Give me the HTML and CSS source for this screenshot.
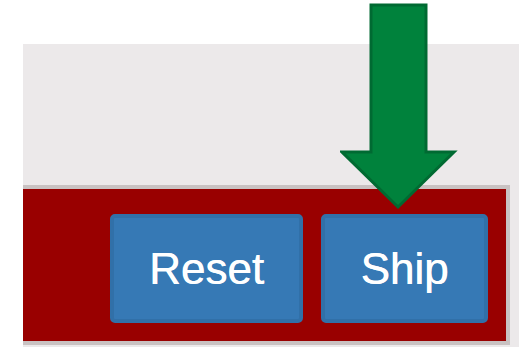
FILE: index.html
```html
<!doctype html>
<html>
<head>
<meta charset="utf-8">
<title>Ship</title>
<link rel="stylesheet" href="styles.css">
</head>

<body>
<div class="panel">
	<div class="actions">
		<button class="btn btn-reset" type="button">Reset</button>
		<button class="btn btn-ship" type="button">Ship</button>
	</div>
</div>

<svg class="arrow" width="120" height="212" viewBox="0 0 120 212">
	<polygon points="31,5 86,5 86,152 114,152 58,207 2,152 31,152" />
</svg>
</body>
</html>
```

FILE: styles.css
```css
html, body {
	margin: 0;
	padding: 0;
	background: #FFF;
	font-family: "Liberation Sans", Arial, sans-serif;
}
body {
	width: 519px;
	height: 347px;
	overflow: hidden;
	position: relative;
}
.panel {
	margin: 44px 0 0 23px;
	height: 303px;
	background: #ECE9EA;
	padding-top: 141px;
	box-sizing: border-box;
}
.actions {
	width: 487px;
	height: 160px;
	box-sizing: border-box;
	background: #990000;
	border: 4px solid #C9C2C2;
	border-left: none;
	display: flex;
	justify-content: flex-end;
	align-items: flex-start;
	gap: 18px;
	padding: 25px 18px 0 0;
}
.btn {
	height: 109px;
	background: #3679B5;
	border: 4px solid #3170A8;
	border-radius: 5px;
	color: #FFF;
	font-family: "Liberation Sans", Arial, sans-serif;
	font-size: 44px;
	line-height: 1;
	padding: 0;
	cursor: pointer;
	text-shadow: 0.5px 0 0 #FFF;
}
.btn-reset {
	width: 193px;
}
.btn-ship {
	width: 167px;
}
.arrow {
	position: absolute;
	top: 0;
	left: 340px;
}
.arrow polygon {
	fill: #00823C;
	stroke: #006A32;
	stroke-width: 3;
}
```
